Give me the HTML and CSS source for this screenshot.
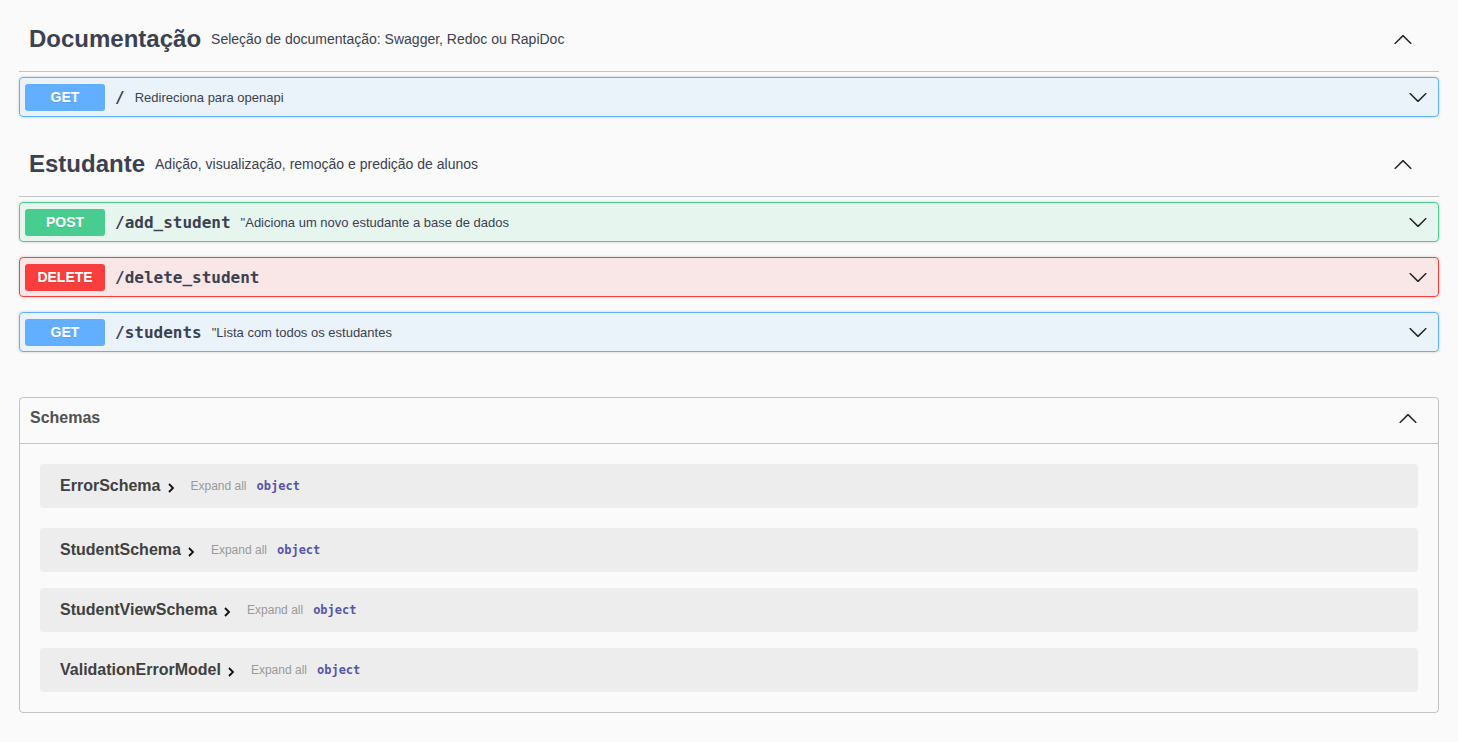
FILE: index.html
```html
<!DOCTYPE html>
<html lang="pt">
<head>
<meta charset="utf-8">
<title>API</title>
<link rel="stylesheet" href="styles.css">
</head>
<body>
<div class="wrapper">
  <div class="tag-header">
    <h3 class="tag-title">Documentação</h3>
    <small class="tag-desc">Seleção de documentação: Swagger, Redoc ou RapiDoc</small>
    <svg class="tag-caret" viewBox="0 0 20 20"><path d="M17.418 14.908c.272.268.709.268.979 0s.271-.701 0-.969l-7.908-7.830c-.27-.268-.707-.268-.979 0l-7.908 7.830c-.27.268-.27.701 0 .969.271.268.709.268.979 0L10 7.767l7.418 7.141z"/></svg>
  </div>
  <div class="opblock get">
    <span class="method">GET</span>
    <span class="path">/</span>
    <span class="desc">Redireciona para openapi</span>
    <svg class="op-caret" viewBox="0 0 20 20"><path d="M17.418 6.109c.272-.268.709-.268.979 0s.271.701 0 .969l-7.908 7.83c-.27.268-.707.268-.979 0l-7.908-7.83c-.27-.268-.27-.701 0-.969.271-.268.709-.268.979 0L10 13.25l7.418-7.141z"/></svg>
  </div>

  <div class="tag-header">
    <h3 class="tag-title">Estudante</h3>
    <small class="tag-desc">Adição, visualização, remoção e predição de alunos</small>
    <svg class="tag-caret" viewBox="0 0 20 20"><path d="M17.418 14.908c.272.268.709.268.979 0s.271-.701 0-.969l-7.908-7.830c-.27-.268-.707-.268-.979 0l-7.908 7.830c-.27.268-.27.701 0 .969.271.268.709.268.979 0L10 7.767l7.418 7.141z"/></svg>
  </div>
  <div class="opblock post">
    <span class="method">POST</span>
    <span class="path">/add_student</span>
    <span class="desc">"Adiciona um novo estudante a base de dados</span>
    <svg class="op-caret" viewBox="0 0 20 20"><path d="M17.418 6.109c.272-.268.709-.268.979 0s.271.701 0 .969l-7.908 7.83c-.27.268-.707.268-.979 0l-7.908-7.83c-.27-.268-.27-.701 0-.969.271-.268.709-.268.979 0L10 13.25l7.418-7.141z"/></svg>
  </div>
  <div class="opblock delete">
    <span class="method">DELETE</span>
    <span class="path">/delete_student</span>
    <span class="desc"></span>
    <svg class="op-caret" viewBox="0 0 20 20"><path d="M17.418 6.109c.272-.268.709-.268.979 0s.271.701 0 .969l-7.908 7.83c-.27.268-.707.268-.979 0l-7.908-7.83c-.27-.268-.27-.701 0-.969.271-.268.709-.268.979 0L10 13.25l7.418-7.141z"/></svg>
  </div>
  <div class="opblock get">
    <span class="method">GET</span>
    <span class="path">/students</span>
    <span class="desc">"Lista com todos os estudantes</span>
    <svg class="op-caret" viewBox="0 0 20 20"><path d="M17.418 6.109c.272-.268.709-.268.979 0s.271.701 0 .969l-7.908 7.83c-.27.268-.707.268-.979 0l-7.908-7.83c-.27-.268-.27-.701 0-.969.271-.268.709-.268.979 0L10 13.25l7.418-7.141z"/></svg>
  </div>

  <section class="models">
    <div class="models-header">
      <h4 class="models-title">Schemas</h4>
      <svg class="models-caret" viewBox="0 0 20 20"><path d="M17.418 14.908c.272.268.709.268.979 0s.271-.701 0-.969l-7.908-7.830c-.27-.268-.707-.268-.979 0l-7.908 7.830c-.27.268-.27.701 0 .969.271.268.709.268.979 0L10 7.767l7.418 7.141z"/></svg>
    </div>
    <div class="model-list">
      <div class="model">
        <span class="model-title">ErrorSchema</span>
        <svg class="model-toggle" viewBox="0 0 10 12"><path d="M3 2 L7 6 L3 10" /></svg>
        <span class="expand">Expand all</span>
        <span class="prop-type">object</span>
      </div>
      <div class="model">
        <span class="model-title">StudentSchema</span>
        <svg class="model-toggle" viewBox="0 0 10 12"><path d="M3 2 L7 6 L3 10" /></svg>
        <span class="expand">Expand all</span>
        <span class="prop-type">object</span>
      </div>
      <div class="model">
        <span class="model-title">StudentViewSchema</span>
        <svg class="model-toggle" viewBox="0 0 10 12"><path d="M3 2 L7 6 L3 10" /></svg>
        <span class="expand">Expand all</span>
        <span class="prop-type">object</span>
      </div>
      <div class="model">
        <span class="model-title">ValidationErrorModel</span>
        <svg class="model-toggle" viewBox="0 0 10 12"><path d="M3 2 L7 6 L3 10" /></svg>
        <span class="expand">Expand all</span>
        <span class="prop-type">object</span>
      </div>
    </div>
  </section>
</div>
</body>
</html>
```
FILE: styles.css
```css
html, body {
  margin: 0;
  background: #fafafa;
}
body {
  font-family: "Liberation Sans", Arial, Helvetica, sans-serif;
  color: #3b4151;
}
.wrapper {
  display: flex;
  flex-direction: column;
  padding: 7px 19px 30px;
}
.tag-header {
  display: flex;
  align-items: center;
  height: 65px;
  box-sizing: border-box;
  padding: 10px 20px 10px 10px;
  border-bottom: 1px solid rgba(59, 65, 81, 0.3);
  margin-bottom: 5px;
}
.tag-title {
  margin: 0;
  font-size: 24px;
  font-weight: 700;
  color: #3b4151;
}
.tag-desc {
  flex: 1;
  font-size: 14px;
  padding: 0 10px;
  color: #3b4151;
}
.tag-caret {
  width: 20px;
  height: 20px;
  margin-right: 6px;
  fill: #222;
}
.opblock {
  display: flex;
  align-items: center;
  height: 40px;
  box-sizing: border-box;
  border: 1px solid;
  border-radius: 4px;
  box-shadow: 0 0 3px rgba(0, 0, 0, 0.19);
  padding: 0 5px;
  margin-bottom: 15px;
}
.opblock.get {
  background: rgba(97, 175, 254, 0.1);
  border-color: #61affe;
}
.opblock.post {
  background: rgba(73, 204, 144, 0.1);
  border-color: #49cc90;
}
.opblock.delete {
  background: rgba(249, 62, 62, 0.1);
  border-color: #f93e3e;
}
.method {
  width: 80px;
  height: 27px;
  line-height: 27px;
  text-align: center;
  border-radius: 3px;
  color: #fff;
  font-size: 14px;
  font-weight: 700;
  text-shadow: 0 1px 0 rgba(0, 0, 0, 0.1);
}
.get .method { background: #61affe; }
.post .method { background: #49cc90; }
.delete .method { background: #f93e3e; }
.path {
  font-family: "DejaVu Sans Mono", "Liberation Mono", monospace;
  font-size: 16px;
  font-weight: 700;
  padding: 0 10px;
  color: #3b4151;
}
.desc {
  flex: 1;
  font-size: 13px;
  color: #3b4151;
}
.op-caret {
  width: 20px;
  height: 20px;
  margin-right: 5px;
  fill: #222;
}
.models {
  margin-top: 30px;
  border: 1px solid rgba(59, 65, 81, 0.3);
  border-radius: 4px;
  padding-bottom: 20px;
}
.models-header {
  display: flex;
  align-items: center;
  height: 46px;
  box-sizing: border-box;
  padding: 7px 20px 13px 10px;
  border-bottom: 1px solid rgba(59, 65, 81, 0.3);
}
.models-title {
  flex: 1;
  margin: 0;
  font-size: 16px;
  font-weight: 700;
  color: #505050;
}
.models-caret {
  width: 20px;
  height: 20px;
  fill: #222;
}
.model-list {
  display: flex;
  flex-direction: column;
  gap: 16px;
  padding: 20px 20px 0;
}
.model-list .model:first-child {
  margin-bottom: 4px;
}
.model {
  display: flex;
  align-items: center;
  height: 44px;
  box-sizing: border-box;
  padding: 0 20px;
  background: rgba(0, 0, 0, 0.05);
  border-radius: 4px;
}
.model-title {
  font-size: 16px;
  font-weight: 700;
  color: #404040;
}
.model-toggle {
  width: 10px;
  height: 12px;
  margin: 3px 0 0 5px;
  fill: none;
  stroke: #111;
  stroke-width: 1.8;
}
.expand {
  margin-left: 15px;
  font-size: 12px;
  color: #999;
}
.prop-type {
  margin-left: 10px;
  font-family: "DejaVu Sans Mono", "Liberation Mono", monospace;
  font-size: 12px;
  font-weight: 700;
  color: #55a;
}
```
